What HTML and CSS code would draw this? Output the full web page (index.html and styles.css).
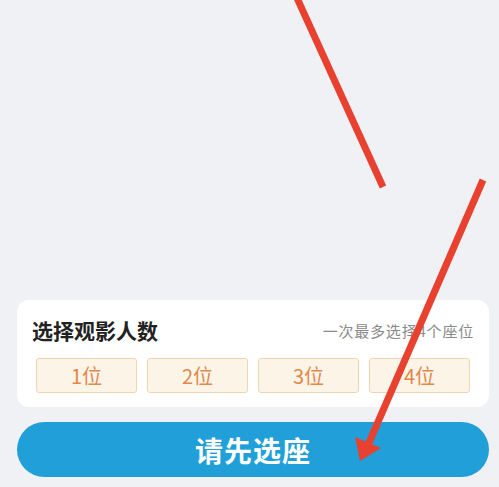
FILE: index.html
```html
<!DOCTYPE html>
<html lang="zh-CN">

<head>
   <meta charset="UTF-8">
   <meta name="viewport" content="width=device-width, initial-scale=1.0">
   <link rel="stylesheet" href="styles.css">
</head>

<body>
   <div class="page">
      <div class="card">
         <div class="card-head">
            <span class="card-title">选择观影人数</span>
            <span class="card-tip">一次最多选择4个座位</span>
         </div>
         <div class="count-row">
            <button class="count-btn">1位</button>
            <button class="count-btn">2位</button>
            <button class="count-btn">3位</button>
            <button class="count-btn">4位</button>
         </div>
      </div>
      <button class="main-btn">请先选座</button>
   </div>

   <!-- red arrows drawn over the screenshot -->
   <svg class="marks" width="499" height="487" viewBox="0 0 499 487">
      <line x1="297" y1="-2" x2="383" y2="187" stroke="#e8412f" stroke-width="7" />
      <line x1="483" y1="180" x2="368" y2="445" stroke="#e8412f" stroke-width="7" />
      <polygon points="355,437 381,448 360,461" fill="#e8412f" />
   </svg>
</body>

</html>
```

FILE: styles.css
```css
body {
   margin: 0;
   background-color: #f0f1f5;
   font-family: "Noto Sans CJK SC", "Noto Sans", sans-serif;
}

.page {
   display: flex;
   flex-direction: column;
   justify-content: flex-end;
   height: 487px;
   padding: 0 10px 10px 17px;
   box-sizing: border-box;
   width: 499px;
}

.card {
   background-color: #fff;
   border-radius: 12px;
   padding: 10px 15px 14px 15px;
   margin-bottom: 15px;
}

.card-head {
   display: flex;
   justify-content: space-between;
   align-items: center;
   height: 40px;
   margin-bottom: 8px;
}

.card-title {
   font-size: 21px;
   font-weight: bold;
   color: #222;
}

.card-tip {
   font-size: 15px;
   letter-spacing: 0.8px;
   color: #8a8a8a;
}

.count-row {
   display: flex;
   gap: 10px;
   margin: 0 4px;
}

.count-btn {
   flex: 1;
   height: 35px;
   border: 1px solid #f0d5b4;
   border-radius: 3px;
   background-color: #fdf4e8;
   color: #e0894a;
   font-family: inherit;
   font-size: 20px;
   padding: 0;
}

.main-btn {
   height: 55px;
   border: none;
   border-radius: 28px;
   background-color: #209fd9;
   color: #fff;
   font-family: inherit;
   font-size: 28px;
   font-weight: bold;
   letter-spacing: 1px;
}

.marks {
   position: absolute;
   top: 0;
   left: 0;
   pointer-events: none;
}
```
